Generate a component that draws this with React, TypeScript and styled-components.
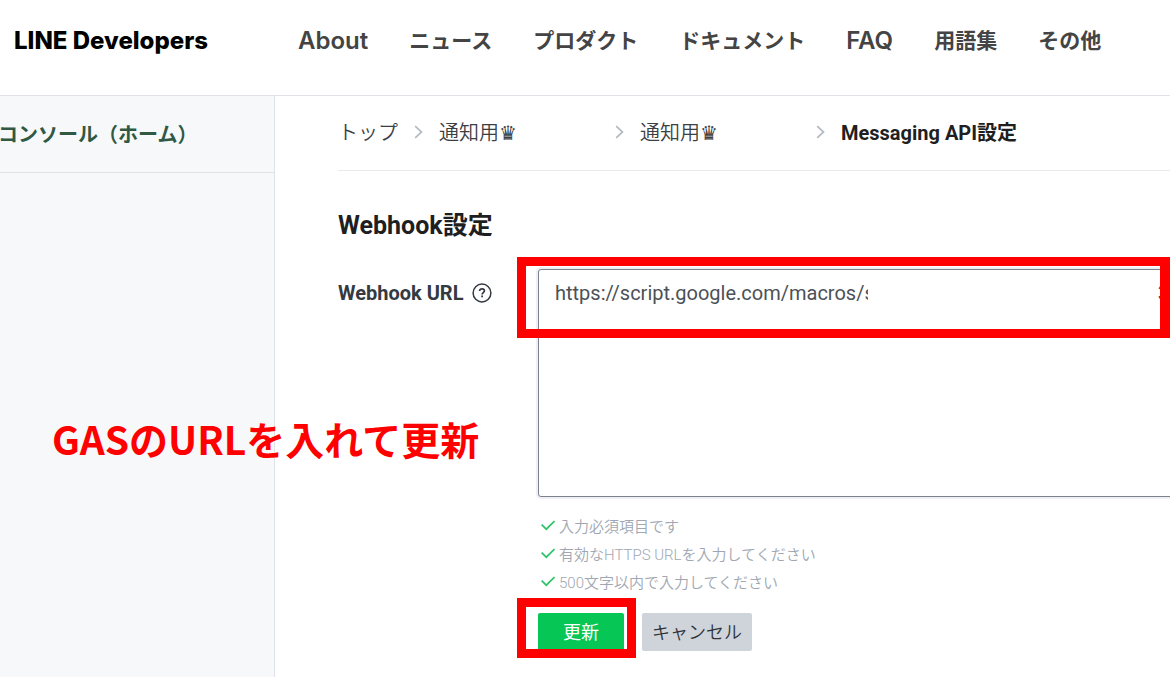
import React from "react";
import styled, { createGlobalStyle } from "styled-components";

const GlobalStyle = createGlobalStyle`
  *, *::before, *::after { box-sizing: border-box; }
  html, body { margin: 0; background: #fff; }
  body {
    font-family: Roboto, "Noto Sans CJK JP", sans-serif;
    font-size: 20px;
    color: #3c4043;
    overflow-x: hidden;
  }
  #root { position: relative; overflow: hidden; }
`;

const Page = styled.div`
  display: flex;
  flex-direction: column;
  min-height: 100vh;
`;

const Header = styled.header`
  display: flex;
  align-items: center;
  height: 96px;
  padding: 0 14px 14px;
  border-bottom: 1px solid #dfe3e8;
  font-family: Inter, "Noto Sans CJK JP", sans-serif;
  white-space: nowrap;
`;

const Logo = styled.a`
  flex: none;
  width: 284px;
  font-size: 24px;
  font-weight: 800;
  color: #000;
  text-decoration: none;
`;

const Nav = styled.nav`
  display: flex;
  align-items: center;
  gap: 41px;
`;

const NavLink = styled.a<{ $latin?: boolean }>`
  font-size: ${(p) => (p.$latin ? 24 : 21)}px;
  line-height: 32px;
  font-weight: ${(p) => (p.$latin ? 600 : 700)};
  color: #444;
  text-decoration: none;
`;

const Body = styled.div`
  display: flex;
  flex: 1;
`;

const Sidebar = styled.aside`
  flex: none;
  width: 275px;
  background: #f7f8fa;
  border-right: 1px solid #dfe3e8;
`;

const SideLink = styled.a`
  display: flex;
  align-items: center;
  height: 77px;
  margin-left: -2px;
  padding-bottom: 2px;
  border-bottom: 1px solid #dfe3e8;
  font-weight: 700;
  color: #305843;
  text-decoration: none;
  white-space: nowrap;
`;

const Main = styled.main`
  flex: 1;
  min-width: 0;
  padding-left: 63px;
`;

const Crumbs = styled.ol`
  display: flex;
  align-items: center;
  gap: 16px;
  height: 75px;
  margin: 0;
  padding: 0 0 3px;
  border-bottom: 1px solid #e8eaed;
  list-style: none;
  white-space: nowrap;
`;

const Crumb = styled.li<{ $wide?: boolean }>`
  display: flex;
  align-items: center;
  gap: 16px;
  a {
    width: ${(p) => (p.$wide ? "160px" : "auto")};
    font-weight: 350;
    color: #3c4043;
    text-decoration: none;
  }
  strong { color: #1f1f1f; }
`;

const Title = styled.h2`
  margin: 37px 0 25px;
  font-size: 25px;
  line-height: 36px;
  color: #1f1f1f;
`;

const Field = styled.div`
  display: grid;
  grid-template-columns: 200px 1fr;
`;

const LabelRow = styled.div`
  display: flex;
  align-items: center;
  gap: 8px;
  height: 48px;
  font-weight: 700;
  color: #333a42;
`;

const HelpButton = styled.button`
  display: flex;
  padding: 0;
  border: 0;
  background: none;
  color: #333a42;
`;

const Control = styled.div`
  position: relative;
  min-width: 0;
`;

const UrlBox = styled.textarea`
  display: block;
  width: calc(100% + 8px);
  height: 228px;
  padding: 11px 16px;
  border: 1px solid #7b828c;
  border-radius: 3px;
  box-shadow: 0 0 0 2px #eef0f4;
  outline: 0;
  resize: none;
  overflow: hidden;
  background: #fff;
  font: inherit;
  line-height: 24px;
  color: #4c5157;
`;

const Redaction = styled.div`
  position: absolute;
  top: 8px;
  left: 330px;
  right: 12px;
  height: 40px;
  background: #fff;
`;

const UrlTail = styled.span`
  position: absolute;
  top: 12px;
  right: 1px;
  line-height: 24px;
  color: #4c5157;
`;

const Frame = styled.div`
  position: absolute;
  border: 9px solid #f00;
  pointer-events: none;
`;

const UrlFrame = styled(Frame)`
  top: -12px;
  left: -21px;
  right: 0;
  height: 81px;
  border-right-width: 10px;
`;

const SubmitFrame = styled(Frame)`
  top: -15px;
  left: -21px;
  right: -12px;
  height: 60px;
`;

const Hints = styled.ul`
  margin: 14px 0 18px;
  padding: 0 0 0 3px;
  list-style: none;
`;

const Hint = styled.li`
  display: flex;
  align-items: center;
  gap: 4px;
  height: 28px;
  font-size: 15px;
  font-weight: 350;
  color: #a0a7b2;
`;

const Actions = styled.div`
  display: flex;
  gap: 18px;
`;

const ButtonWrap = styled.div`
  position: relative;
`;

const Button = styled.button<{ $primary?: boolean }>`
  width: ${(p) => (p.$primary ? 86 : 110)}px;
  height: 38px;
  padding: 0 0 3px;
  border: 0;
  border-radius: 2px;
  background: ${(p) => (p.$primary ? "#06c755" : "#cfd4db")};
  color: ${(p) => (p.$primary ? "#fff" : "#303338")};
  font: inherit;
  font-size: 18px;
  font-weight: ${(p) => (p.$primary ? 400 : 350)};
`;

const Note = styled.p`
  position: absolute;
  top: 410px;
  left: 52px;
  margin: 0;
  font-family: "Noto Sans CJK JP", sans-serif;
  font-size: 39px;
  line-height: 56px;
  font-weight: 700;
  color: #f00;
  white-space: nowrap;
  pointer-events: none;
`;

const Chevron = () => (
  <svg width="9" height="14" viewBox="0 0 9 14" fill="none" stroke="#b4bac4" strokeWidth="1.7" aria-hidden="true">
    <path d="M1.2 1.2 7.5 7l-6.3 5.8" />
  </svg>
);

const Check = () => (
  <svg width="14" height="12" viewBox="0 0 14 12" fill="none" stroke="#2fc46c" strokeWidth="1.7" aria-hidden="true">
    <path d="M.6 5.6 5.3 10.2 13.5 2" />
  </svg>
);

const HelpIcon = () => (
  <svg width="20" height="20" viewBox="0 0 20 20" fill="none" stroke="currentColor" aria-hidden="true">
    <circle cx="10" cy="10" r="8.9" strokeWidth="1.5" />
    <path d="M7.6 8.1c0-1.5 1.1-2.3 2.4-2.3s2.4.8 2.4 2c0 1.7-2.3 1.8-2.3 3.6" strokeWidth="1.7" />
    <path d="M10.1 12.6v1.7" strokeWidth="1.8" />
  </svg>
);

const navItems = [
  { text: "About", latin: true },
  { text: "ニュース" },
  { text: "プロダクト" },
  { text: "ドキュメント" },
  { text: "FAQ", latin: true },
  { text: "用語集" },
  { text: "その他" },
];

const hints = ["入力必須項目です", "有効なHTTPS URLを入力してください", "500文字以内で入力してください"];

export default function App() {
  return (
    <Page>
      <GlobalStyle />
      <Header>
        <Logo href="#">LINE Developers</Logo>
        <Nav>
          {navItems.map((item) => (
            <NavLink key={item.text} href="#" $latin={item.latin}>{item.text}</NavLink>
          ))}
        </Nav>
      </Header>
      <Body>
        <Sidebar>
          <SideLink href="#">コンソール（ホーム）</SideLink>
        </Sidebar>
        <Main>
          <Crumbs>
            <Crumb><a href="#">トップ</a><Chevron /></Crumb>
            <Crumb $wide><a href="#">通知用♛</a><Chevron /></Crumb>
            <Crumb $wide><a href="#">通知用♛</a><Chevron /></Crumb>
            <Crumb><strong>Messaging API設定</strong></Crumb>
          </Crumbs>
          <Title>Webhook設定</Title>
          <Field>
            <LabelRow>
              <label htmlFor="webhook-url">Webhook URL</label>
              <HelpButton type="button" aria-label="ヘルプ"><HelpIcon /></HelpButton>
            </LabelRow>
            <Control>
              <UrlBox id="webhook-url" spellCheck={false} defaultValue="https://script.google.com/macros/s" />
              <Redaction />
              <UrlTail>3</UrlTail>
              <UrlFrame />
              <Hints>
                {hints.map((hint) => (
                  <Hint key={hint}><Check />{hint}</Hint>
                ))}
              </Hints>
              <Actions>
                <ButtonWrap>
                  <Button type="button" $primary>更新</Button>
                  <SubmitFrame />
                </ButtonWrap>
                <Button type="button">キャンセル</Button>
              </Actions>
            </Control>
          </Field>
        </Main>
      </Body>
      <Note>GASのURLを入れて更新</Note>
    </Page>
  );
}
